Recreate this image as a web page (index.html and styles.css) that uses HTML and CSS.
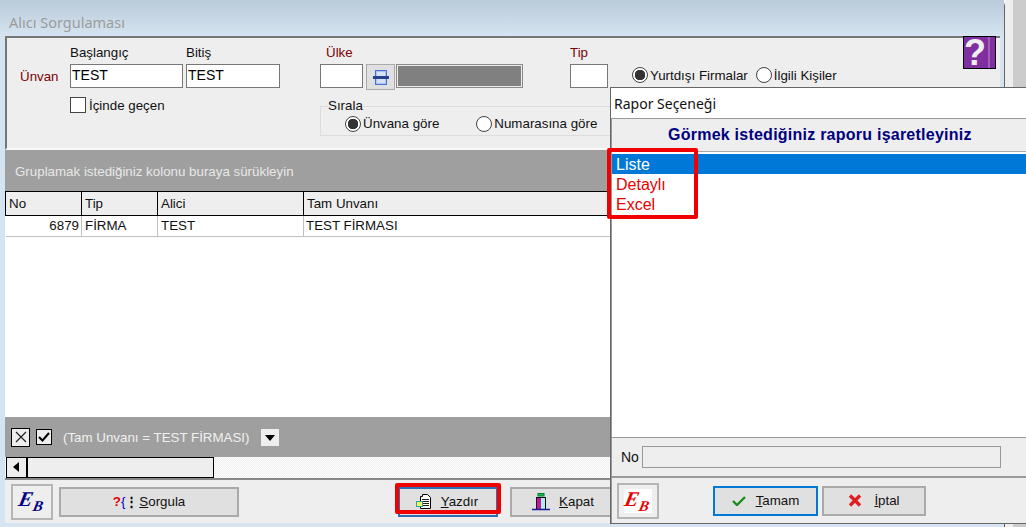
FILE: index.html
```html
<!DOCTYPE html>
<html lang="tr">
<head>
  <meta charset="UTF-8" />
  <title>Alıcı Sorgulaması</title>
  <link rel="stylesheet" href="styles.css">
</head>
<body>
  <div class="screen">
    <div class="window">
      <div class="titlebar">Alıcı Sorgulaması</div>

      <div class="main">
        <!-- filtreler -->
        <div class="filters">
          <div class="f-name">
            <div class="f-name-top">
              <span class="lbl-red unvan">Ünvan</span>
              <div class="field">
                <label class="lbl">Başlangıç</label>
                <input class="txt w-start" type="text" value="TEST">
              </div>
              <div class="field">
                <label class="lbl">Bitiş</label>
                <input class="txt w-end" type="text" value="TEST">
              </div>
            </div>
            <label class="check-row">
              <input class="box" type="checkbox">İçinde geçen
            </label>
          </div>

          <div class="f-country">
            <label class="lbl-red lbl-country">Ülke</label>
            <div class="country-row">
              <input class="txt w-code" type="text">
              <button class="lookup" type="button">
                <svg width="16" height="15" viewBox="0 0 16 15">
                  <rect x="2.500" y="0.500" width="11" height="14" fill="#a9c6f2" stroke="#4a6fd0"/>
                  <path d="M4 3h8M4 5h8M4 10h8M4 12h8" stroke="#fff"/>
                  <rect x="0" y="6" width="16" height="3" fill="#27408f"/>
                </svg>
              </button>
              <div class="country-name"></div>
            </div>
            <fieldset class="sort">
              <legend>Sırala</legend>
              <label class="opt"><input class="radio" type="radio" name="s" checked>Ünvana göre</label>
              <label class="opt opt-2"><input class="radio" type="radio" name="s">Numarasına göre</label>
            </fieldset>
          </div>

          <div class="f-type">
            <label class="lbl-red">Tip</label>
            <input class="txt w-type" type="text">
          </div>

          <div class="f-kind">
            <label class="opt"><input class="radio" type="radio" name="k" checked>Yurtdışı Firmalar</label>
            <label class="opt"><input class="radio" type="radio" name="k">İlgili Kişiler</label>
          </div>
        </div>

        <div class="group-band">Gruplamak istediğiniz kolonu buraya sürükleyin</div>

        <table class="grid">
          <colgroup>
            <col class="c-no"><col class="c-tip"><col class="c-alici"><col>
          </colgroup>
          <thead>
            <tr><th>No</th><th>Tip</th><th>Alici</th><th>Tam Unvanı</th></tr>
          </thead>
          <tbody>
            <tr><td class="num">6879</td><td>FİRMA</td><td>TEST</td><td class="last">TEST FİRMASI</td></tr>
          </tbody>
        </table>
        <div class="grid-rest"></div>

        <div class="filter-band">
          <span class="fb-x">
            <svg width="12" height="12" viewBox="0 0 12 12"><path d="M1 1l10 10M11 1L1 11" stroke="#222" stroke-width="1.2"/></svg>
          </span>
          <span class="fb-check">
            <svg width="12" height="10" viewBox="0 0 12 10"><path d="M1 5l3.5 3.5L11 1" fill="none" stroke="#000" stroke-width="2"/></svg>
          </span>
          <span class="fb-text">(Tam Unvanı = TEST FİRMASI)</span>
          <span class="fb-drop"></span>
        </div>

        <div class="scroll-row">
          <div class="scrollbar"><span class="scroll-btn"></span></div>
        </div>

        <div class="toolbar">
          <button class="logo-btn" type="button"><span class="logo"><i>E</i><b>B</b></span></button>
          <button class="btn btn-query" type="button">
            <span class="ico-q"><em>?</em><u>{</u><s>⋮</s></span><span class="cap"><span class="ul">S</span>orgula</span>
          </button>
          <button class="btn btn-print" type="button">
            <svg width="17" height="17" viewBox="0 0 17 17">
              <path d="M5.500 3.500h2v-2h5l3 3v11h-10z" fill="#fff" stroke="#000"/>
              <path d="M7 6.500h7M7 8.500h7M7 10.500h7M7 12.500h7" stroke="#222"/>
              <rect x="1.500" y="8.500" width="6" height="5" fill="#f6f25a" stroke="#2aa3a3"/>
            </svg>
            <span class="cap"><span class="ul">Y</span>azdır</span>
          </button>
          <button class="btn btn-close" type="button">
            <svg width="18" height="18" viewBox="0 0 18 18">
              <rect x="6" y="0.500" width="6" height="2.500" fill="#19c24b" stroke="#0a7a30"/>
              <rect x="4" y="4" width="5" height="12" fill="#c2189a"/>
              <rect x="9" y="4" width="5" height="12" fill="#a6f0f0"/>
              <path d="M4 4.500h10M13.500 4v12M4.500 4v12" stroke="#111" fill="none"/>
              <path d="M0 16.500h18" stroke="#1a1a9a" stroke-width="1.500"/>
            </svg>
            <span class="cap"><span class="ul">K</span>apat</span>
          </button>
        </div>
      </div>
    </div>
    <div class="side-strip"></div>

    <div class="help">?</div>

    <!-- rapor dialog -->
    <div class="dialog">
      <div class="dlg-title">Rapor Seçeneği</div>
      <div class="dlg-body">
        <div class="dlg-head">Görmek istediğiniz raporu işaretleyiniz</div>
        <ul class="report-list">
          <li class="sel">Liste</li>
          <li>Detaylı</li>
          <li>Excel</li>
        </ul>
        <div class="no-row">
          <label class="lbl">No</label>
          <input class="txt no-input" type="text">
        </div>
        <div class="dlg-buttons">
          <button class="logo-btn" type="button"><span class="logo logo-red"><i>E</i><b>B</b></span></button>
          <button class="btn btn-ok" type="button">
            <svg width="14" height="10" viewBox="0 0 14 10"><path d="M1 5l4 4 8-8" fill="none" stroke="#1c8c1c" stroke-width="2.400"/></svg>
            <span class="cap"><span class="ul">T</span>amam</span>
          </button>
          <button class="btn btn-cancel" type="button">
            <svg width="14" height="13" viewBox="0 0 14 13"><path d="M2 1.500l10 10M12 1.500l-10 10" stroke="#e02020" stroke-width="3.400"/></svg>
            <span class="cap"><span class="ul">İ</span>ptal</span>
          </button>
        </div>
      </div>
    </div>

    <!-- kirmizi isaretler -->
    <div class="mark mark-list"></div>
    <div class="mark mark-print"></div>
  </div>
</body>
</html>
```

FILE: styles.css
```css
* {
  box-sizing: border-box;
}
html, body {
  margin: 0;
  height: 100%;
  overflow: hidden;
}
body {
  font-family: "Liberation Sans", Arial, sans-serif;
  font-size: 13.33px;
  color: #111;
  background: #fff;
}

.screen {
  position: relative;
  display: flex;
  width: 1026px;
  height: 527px;
  overflow: hidden;
}

.window {
  width: 1005px;
  height: 527px;
  padding: 0 4px 0 5px;
  border-right: 1px solid #666;
  background: #d6e4f1;
  border-top-right-radius: 6px;
  display: flex;
  flex-direction: column;
}
.side-strip {
  flex: 1;
  background: linear-gradient(to right, #eeeeee 8px, #cccccc 8px);
}

.titlebar {
  height: 36px;
  margin: 0 -4px 0 -5px;
  padding: 13px 0 0 9px;
  flex: none;
  font-family: "Noto Sans", sans-serif;
  font-size: 14.5px;
  line-height: 18px;
  color: #9c9c9c;
  background: linear-gradient(#b9cad9, #d6e4f1);
}

.main {
  width: 995px;
  height: 487px;
  flex: none;
  display: flex;
  flex-direction: column;
  background: #eeeeee;
}

/* filtreler */
.filters {
  height: 114px;
  flex: none;
  display: flex;
  padding-top: 8px;
  border-top: 2px solid #777;
  border-left: 2px solid #777;
  border-bottom: 2px solid #f8f8f8;
}
.lbl, .lbl-red {
  display: block;
  line-height: 14px;
  height: 18px;
}
.lbl-red {
  color: #800000;
}
.lbl-country {
  padding-left: 6px;
}
.f-name {
  width: 313px;
  flex: none;
}
.f-name-top {
  display: flex;
  align-items: flex-end;
  padding-left: 13px;
}
.unvan {
  width: 50px;
  margin-bottom: 0;
}
.field + .field {
  margin-left: 3px;
}
.txt {
  display: block;
  height: 24px;
  padding: 0 1px 3px;
  border: 1px solid #777;
  background: #fff;
  font: 14px "Liberation Sans", Arial, sans-serif;
  color: #000;
  border-radius: 0;
  outline: none;
}
.w-start { width: 113px; }
.w-end { width: 94px; }
.w-code { width: 43px; }
.w-type { width: 38px; }

.check-row {
  display: flex;
  align-items: center;
  gap: 3px;
  margin: 9px 0 0 63px;
}
.box, .radio {
  appearance: none;
  -webkit-appearance: none;
  margin: 0;
  flex: none;
  background-color: #fff;
}
.box {
  width: 16px;
  height: 16px;
  border: 1px solid #444;
}
.radio {
  width: 16px;
  height: 16px;
  border: 1px solid #444;
  border-radius: 50%;
  margin-right: 1px;
}
.radio:checked {
  background: radial-gradient(circle, #333 0 5px, #fff 5.500px);
}

.f-country {
  width: 250px;
  flex: none;
}
.country-row {
  display: flex;
  align-items: flex-start;
  gap: 3px;
  height: 24px;
}
.lookup {
  width: 29px;
  height: 26px;
  margin: 0 -2px 0 0;
  padding: 0;
  border: 1px solid #aaa;
  background: #e0e0e0;
  display: flex;
  align-items: center;
  justify-content: center;
}
.country-name {
  width: 127px;
  height: 24px;
  background: #808080;
  border: 2px solid #eee;
  outline: 1px solid #888;
  outline-offset: -1px;
}
.sort {
  width: 320px;
  height: 36px;
  margin: 11px 0 0;
  padding: 0 0 0 24px;
  border: 1px solid #dcdcdc;
  display: flex;
  align-items: center;
  position: relative;
  top: 1px;
}
.sort legend {
  padding: 0;
  margin-left: -17px;
  line-height: 12px;
}
.opt {
  display: inline-flex;
  align-items: center;
  gap: 1px;
  white-space: nowrap;
}
.opt-2 {
  margin-left: 37px;
}

.f-type {
  margin-left: 0;
  width: 62px;
  flex: none;
}
.f-kind {
  display: flex;
  align-items: center;
  gap: 8px;
  height: 16px;
  margin-top: 21px;
}

.group-band {
  height: 41px;
  flex: none;
  padding: 14px 0 0 10px;
  background: #9f9f9f;
  color: #e8e8e8;
  line-height: 16px;
}

/* tablo */
.grid {
  width: 100%;
  flex: none;
  border-collapse: collapse;
  table-layout: fixed;
  background: #fff;
}
.c-no { width: 76px; }
.c-tip { width: 76px; }
.c-alici { width: 146px; }
.grid th {
  height: 24px;
  padding: 0 2px 0 3px;
  font-weight: normal;
  text-align: left;
  background: #eee;
  border: 1px solid #000;
}
.grid td {
  height: 21px;
  padding: 0 2px 1px 3px;
  border-right: 1px solid #c0c0c0;
  border-bottom: 1px solid #c0c0c0;
}
.grid .num {
  text-align: right;
}
.grid .last {
  padding-left: 2px;
}
.grid-rest {
  flex: 1;
  background: #fff;
}

.filter-band {
  height: 40px;
  flex: none;
  display: flex;
  align-items: center;
  padding-left: 6px;
  background: #9f9f9f;
  color: #f0f0f0;
}
.fb-x {
  width: 19px;
  height: 19px;
  border: 1px solid #000;
  background: #eee;
  display: flex;
  align-items: center;
  justify-content: center;
}
.fb-check {
  width: 16px;
  height: 16px;
  margin-left: 6px;
  border: 1px solid #000;
  background: #eee;
  display: flex;
  align-items: center;
  justify-content: center;
}
.fb-text {
  margin-left: 11px;
}
.fb-drop {
  width: 18px;
  height: 17px;
  margin-left: 11px;
  background: #eee;
  position: relative;
}
.fb-drop::after {
  content: "";
  position: absolute;
  left: 4px;
  top: 6px;
  border: 5px solid transparent;
  border-top: 6px solid #000;
  border-bottom: 0;
}

.scroll-row {
  height: 21px;
  flex: none;
  background: conic-gradient(#eee 25%, #fff 0 50%, #eee 0 75%, #fff 0) 0 0/2px 2px;
}
.scrollbar {
  width: 208px;
  height: 21px;
  margin-left: 1px;
  border: 1px solid #000;
  background: #eee;
}
.scroll-btn {
  display: block;
  width: 21px;
  height: 19px;
  border-right: 2px solid #000;
  position: relative;
}
.scroll-btn::after {
  content: "";
  position: absolute;
  left: 6px;
  top: 4px;
  border: 5px solid transparent;
  border-right: 6px solid #000;
  border-left: 0;
}

/* butonlar */
.toolbar {
  height: 45px;
  flex: none;
  display: flex;
  align-items: center;
  padding-left: 6px;
  border-top: 2px solid #888;
  background: #eee;
  overflow: hidden;
}
.btn {
  height: 30px;
  display: flex;
  align-items: center;
  justify-content: center;
  padding: 0;
  border: 2px solid #aaa;
  background: #e0e0e0;
  font: 13.33px "Liberation Sans", Arial, sans-serif;
  color: #111;
  flex: none;
}
.cap .ul {
  text-decoration: underline;
}
.logo-btn {
  width: 42px;
  height: 36px;
  flex: none;
  padding: 0;
  border: 2px solid #b5b5b5;
  background: #eee;
}
.logo {
  display: block;
  width: 28px;
  height: 26px;
  margin: 0 auto;
  position: relative;
  font-family: "Liberation Serif", serif;
  font-weight: bold;
  font-style: italic;
  color: #000080;
}
.logo i {
  position: absolute;
  left: 1px;
  top: 0;
  font-size: 21px;
  line-height: 20px;
  transform: skewX(-12deg);
}
.logo b {
  position: absolute;
  left: 15px;
  top: 10px;
  font-size: 15px;
  line-height: 15px;
  transform: skewX(-12deg);
}
.logo-red {
  height: 24px;
  background: #fff;
  color: #e80000;
}
.btn-query {
  width: 180px;
  margin-left: 6px;
}
.ico-q {
  margin-right: 1px;
  font-weight: bold;
}
.ico-q em {
  font-style: normal;
  color: #e00000;
}
.ico-q u {
  text-decoration: none;
  font-weight: normal;
  color: #0000c0;
}
.ico-q s {
  text-decoration: none;
  color: #000;
}
.btn-print {
  width: 100px;
  margin-left: 159px;
  gap: 9px;
  padding-right: 3px;
  border-color: #2f6db5;
}
.btn-close {
  width: 116px;
  margin-left: 12px;
  gap: 9px;
  padding-right: 10px;
}

.help {
  position: absolute;
  left: 963px;
  top: 36px;
  width: 33px;
  height: 33px;
  border: 1px solid #000;
  background: linear-gradient(to right, #7f2f9f 0 24px, #a060b8 24px 26px, #7f2f9f 26px);
  color: #eee;
  font-family: "Liberation Sans", Arial, sans-serif;
  font-weight: bold;
  font-size: 36px;
  line-height: 31px;
}

/* dialog */
.dialog {
  position: absolute;
  left: 610px;
  top: 87px;
  width: 416px;
  height: 437px;
  background: #fff;
  border-top: 1px solid #666;
  border-left: 1px solid #666;
  border-bottom: 1px solid #666;
  display: flex;
  flex-direction: column;
}
.dlg-title {
  height: 31px;
  flex: none;
  padding-left: 3px;
  font-family: "Noto Sans", sans-serif;
  font-size: 14px;
  line-height: 31px;
  color: #111;
  border-bottom: 1px solid #999;
}
.dlg-body {
  flex: 1;
  display: flex;
  flex-direction: column;
  border-left: 1px solid #999;
  background: #eee;
}
.dlg-head {
  height: 33px;
  flex: none;
  padding-left: 56px;
  line-height: 32px;
  font-size: 16px;
  font-weight: bold;
  color: #000080;
  letter-spacing: 0.24px;
  border-bottom: 1px solid #aaa;
}
.report-list {
  flex: 1;
  margin: 0;
  padding: 2px 0 0;
  list-style: none;
  background: #fff;
  font-size: 16px;
  color: #e80000;
  border-bottom: 1px solid #999;
}
.report-list li {
  height: 20px;
  line-height: 22px;
  padding-left: 4px;
}
.report-list .sel {
  background: #0078d7;
  color: #fff;
}
.no-row {
  height: 40px;
  flex: none;
  display: flex;
  align-items: flex-start;
  padding: 8px 0 0 9px;
  border-bottom: 2px solid #999;
}
.no-row .lbl {
  width: 21px;
  line-height: 22px;
  font-size: 14px;
}
.no-input {
  width: 359px;
  height: 22px;
  background: #eee;
  border-color: #999;
}
.dlg-buttons {
  height: 45px;
  flex: none;
  display: flex;
  align-items: center;
  padding-left: 5px;
}
.btn-ok {
  width: 105px;
  margin-left: 54px;
  gap: 10px;
  border-color: #0078d7;
}
.btn-cancel {
  width: 104px;
  margin-left: 4px;
  gap: 12px;
}

.mark {
  position: absolute;
  border: 4px solid #f00000;
  border-radius: 2px;
  pointer-events: none;
}
.mark-list {
  left: 607px;
  top: 148px;
  width: 91px;
  height: 71px;
}
.mark-print {
  left: 395px;
  top: 483px;
  width: 106px;
  height: 31px;
}
```
